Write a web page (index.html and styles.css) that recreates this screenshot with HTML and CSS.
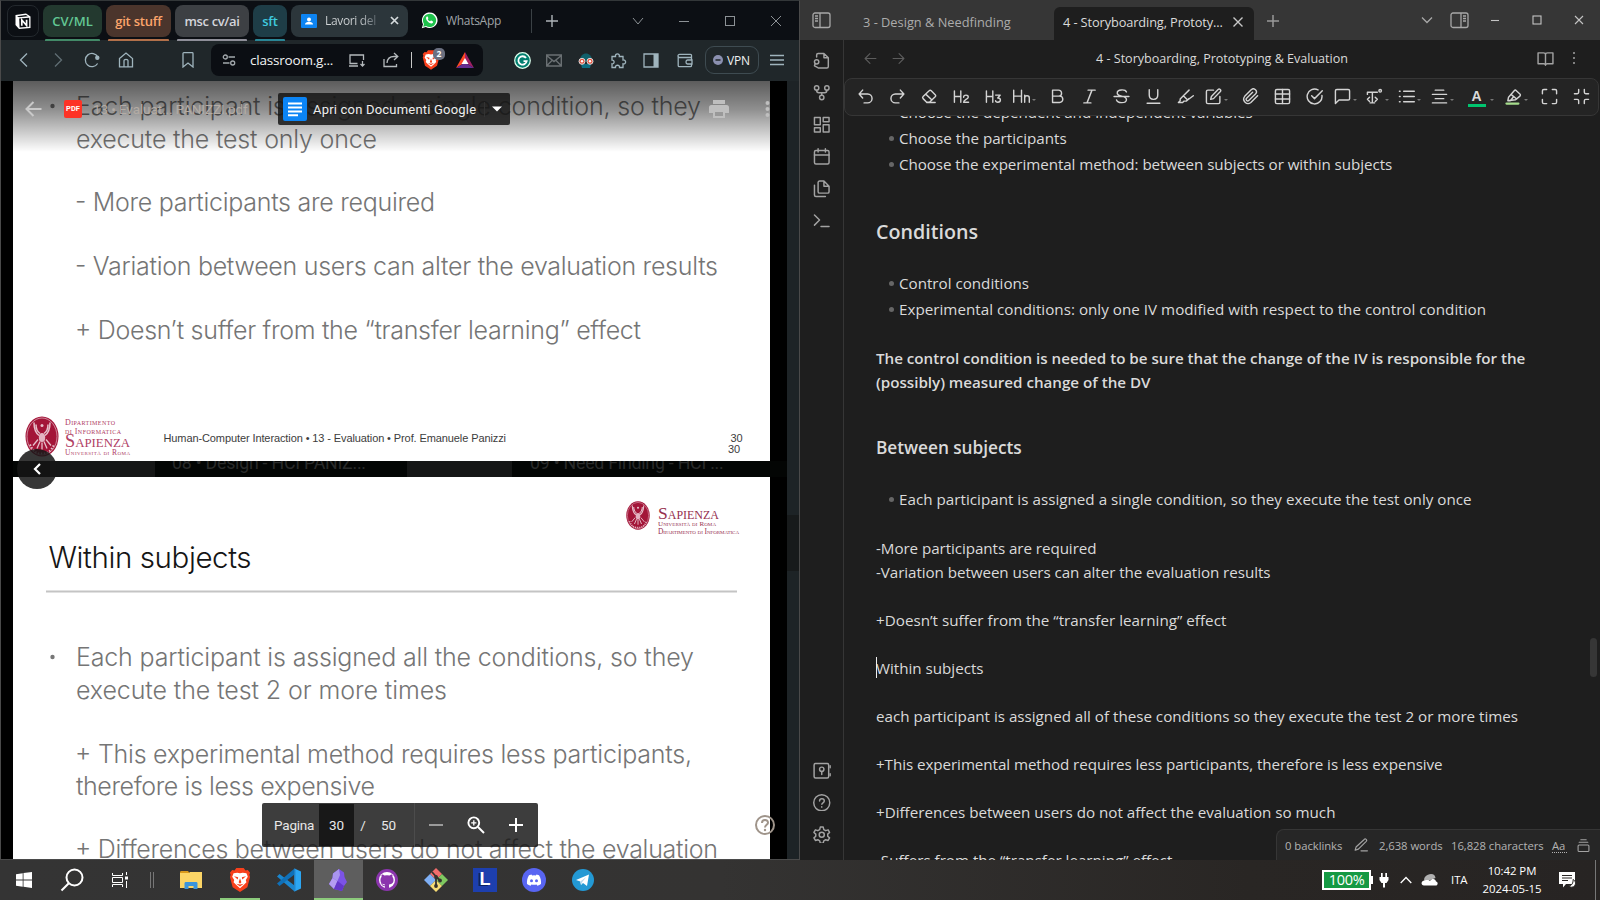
FILE: index.html
```html
<!DOCTYPE html>
<html lang="en">
<head>
<meta charset="utf-8">
<title>Desktop</title>
<link rel="stylesheet" href="styles.css">
</head>
<body>
<div class="desktop">
<section class="browser">
  <div class="tabstrip">
    <div class="pin"><svg width="18" height="18" viewBox="0 0 18 18"><path d="M1.500 3 12 1.500 16.500 4.600V16L5 17 1.500 13z" fill="#fff"/><path d="M3 4.200 12 3l2 1.300L5 5.200zM5.200 6.500 15.200 5.800v9L5.600 15.600z" fill="#0c0f14"/><path d="M7.800 13.800V8L12.600 13.500V7.700" stroke="#fff" stroke-width="1.700" fill="none"/></svg></div>
    <div class="group g1">CV/ML</div><div class="group g2">git stuff</div><div class="group g3">msc cv/ai</div><div class="group g4">sft</div>
    <div class="tab-active"><svg width="16" height="14" viewBox="0 0 16 14"><rect width="16" height="14" rx="1" fill="#0d84f2"/><circle cx="8" cy="5.4" r="2" fill="#fff"/><path d="M4 10.6c0-2 2-2.8 4-2.8s4 .8 4 2.8z" fill="#fff"/></svg><span class="tab-title">Lavori del</span><svg width="9" height="9" viewBox="0 0 9 9"><path d="M1 1l7 7M8 1l-7 7" stroke="#d5dadd" stroke-width="1.7"/></svg></div>
    <div class="tab-wa"><svg width="17" height="17" viewBox="0 0 17 17"><path d="M.8 16.3 2 12.2A7.8 7.8 0 1 1 4.8 15z" fill="#fff"/><path d="M2.2 14.8 3 12a6.6 6.6 0 1 1 2.2 2.1z" fill="#1fc24c"/><path d="M5.9 4.6c-1.7 1.2-.6 3.6 1.1 5.2 1.7 1.600 4 2.300 5 .6.300-.7.100-.9-.5-1.200l-1.200-.6c-.5-.2-.7.800-1.200.7C8 8.900 7 7.900 6.800 7.200c0-.4.7-.7.500-1.200l-.5-1.200c-.2-.400-.6-.400-.9-.2z" fill="#fff"/></svg><span>WhatsApp</span></div>
    <div class="cell plus"><svg width="12" height="12" viewBox="0 0 12 12"><path d="M6 0v12M0 6h12" stroke="#aeb4b8" stroke-width="1.4"/></svg></div>
    <div class="winbtns">
      <svg width="46" height="12" viewBox="0 0 46 12"><path d="M18 3l5 6 5-6" class="wl"/></svg>
      <svg width="46" height="12" viewBox="0 0 46 12"><path d="M18 6.500h10" class="wl"/></svg>
      <svg width="46" height="12" viewBox="0 0 46 12"><rect x="18.500" y="1.500" width="9" height="9" class="wl"/></svg>
      <svg width="46" height="12" viewBox="0 0 46 12"><path d="M18 1l10 10M28 1L18 11" class="wl"/></svg>
    </div>
  </div>
  <div class="navbar">
    <div class="cell w34"><svg width="16" height="16" viewBox="0 0 16 16"><path d="M11 1.500 4.500 8l6.500 6.500" class="nl"/></svg></div>
    <div class="cell w34 dim"><svg width="16" height="16" viewBox="0 0 16 16"><path d="M5 1.500 11.500 8 5 14.500" class="nl"/></svg></div>
    <div class="cell w34"><svg width="16" height="16" viewBox="0 0 16 16"><path d="M13.600 11.500A6.600 6.600 0 1 1 13.800 5" class="nl"/><circle cx="13.300" cy="5.800" r="2.200" fill="#9fb4bd"/></svg></div>
    <div class="cell w34"><svg width="16" height="16" viewBox="0 0 16 16"><path d="M1.500 6.500 8 1l6.500 5.500v8.400h-13zM6 14.900V8.500c0-1.500 4-1.500 4 0v6.400" class="nl"/></svg></div>
    <div class="cell w34 bookmark"><svg width="16" height="16" viewBox="0 0 16 16"><path d="M3 1.500c0-.5.4-.8.800-.8h8.400c.5 0 .8.3.8.8v13.500L8 11l-5 4z" class="nl"/></svg></div>
    <div class="urlbar">
      <div class="cell site"><svg width="14" height="14" viewBox="0 0 14 14"><g fill="none" stroke="#a3a9ad" stroke-width="1.300"><circle cx="3.300" cy="4" r="2"/><circle cx="10.700" cy="10" r="2"/><path d="M6.500 4H13M1 10h6.500"/></g></svg></div>
      <span class="url">classroom.g...</span>
      <div class="cell"><svg width="18" height="16" viewBox="0 0 18 16"><path d="M9.500 11.500H2V3h13.500v5M1 14h9M14.500 9v5M12.500 12l2 2 2-2" fill="none" stroke="#b4b9bc" stroke-width="1.300"/></svg></div>
      <div class="cell share"><svg width="16" height="16" viewBox="0 0 16 16"><path d="M1 7v7.500h12.500V12M4 11c.3-4 3-6.500 7-6.500h3M11 1l3.800 3.500L11 8" fill="none" stroke="#b4b9bc" stroke-width="1.300"/></svg></div>
      <i class="usep"></i>
      <div class="cell brave"><svg width="18" height="20" viewBox="0 0 24 26"><use href="#lion"/></svg><b class="badge">2</b></div>
      <div class="cell bat"><svg width="18" height="16" viewBox="0 0 18 16"><path d="M9 0 0 16 9 10.500z" fill="#ff4724"/><path d="M9 0l9 16-9-5.500z" fill="#9e1f63"/><path d="M0 16h18l-9-5.500z" fill="#662d91"/><path d="M9 6l-3.500 6h7z" fill="#fff"/></svg></div>
    </div>
    <div class="cell ext"><svg width="17" height="17" viewBox="0 0 17 17"><circle cx="8.500" cy="8.500" r="7.800" fill="#027e6f" stroke="#dfe" stroke-width="1.200"/><path d="M12 6A4.200 4.200 0 1 0 12.700 9.200H9.500" fill="none" stroke="#fff" stroke-width="1.800"/></svg></div>
    <div class="cell"><svg width="16" height="13" viewBox="0 0 16 13"><path d="M.7 1h14.600v11H.7zM.7 1.500 8 7.500l7.300-6M1 11.500l5-5M15 11.500l-5-5" fill="none" stroke="#6a7073" stroke-width="1.400"/></svg></div>
    <div class="cell"><svg width="16" height="15" viewBox="0 0 16 15"><path d="M2 8C1.500-2 14.500-2 14 8z" fill="#11606b"/><path d="M3 11h10l-1 4H4z" fill="#0d6d80"/><circle cx="4" cy="8.300" r="3" fill="#e8503a" stroke="#ddd"/><circle cx="12" cy="8.300" r="3" fill="#e8503a" stroke="#ddd"/><circle cx="4" cy="8.300" r="1.200" fill="#fff"/><circle cx="12" cy="8.300" r="1.200" fill="#fff"/></svg></div>
    <div class="cell"><svg width="17" height="17" viewBox="0 0 17 17"><path d="M2 4.500h3.500C4.800 1 10 1 9.300 4.500H13V8c3.500-.7 3.500 4.500 0 3.800v3.700H9.500c.5-3-4.500-3-4 0H2v-3.700c2.800.4 2.800-4 0-3.700z" class="nl"/></svg></div>
    <div class="cell w34"><svg width="16" height="15" viewBox="0 0 16 15"><path d="M1 1h14v13H1z" class="nl"/><path d="M10.500 1H15v13h-4.500z" fill="#9fb4bd"/></svg></div>
    <div class="cell w34"><svg width="16" height="15" viewBox="0 0 16 15"><path d="M14.500 4.500v-2c0-.8-.4-1.200-1-1.200H2.500c-2 0-2 3.200 0 3.200h12V7M1.200 3v9.500c0 .8.500 1.200 1.200 1.200h11c.7 0 1.100-.4 1.100-1.200V11M10.500 7H15v4h-4.500c-2 0-2-4 0-4z" class="nl"/></svg></div>
    <div class="vpn"><svg width="10" height="10" viewBox="0 0 10 10"><circle cx="5" cy="5" r="5" fill="#8b90b0"/><path d="M2.500 5h5" stroke="#20272a" stroke-width="1.500"/></svg>VPN</div>
    <div class="cell menu"><svg width="14" height="12" viewBox="0 0 14 12"><path d="M0 1.500h14M0 6h14M0 10.500h14" class="nl"/></svg></div>
  </div>
  <div class="viewer">
    <div class="pages">
      <svg class="slide s1" viewBox="13 81 757 380" width="757" height="380">
        <g class="body">
          <circle cx="52.500" cy="106" r="2.200" fill="#777"/>
          <text x="76" y="115" textLength="625">Each participant is assigned a single condition, so they</text>
          <text x="76" y="147.500" textLength="301">execute the test only once</text>
          <text x="75" y="211" textLength="360">- More participants are required</text>
          <text x="75" y="274.500" textLength="643">- Variation between users can alter the evaluation results</text>
          <text x="75" y="339" textLength="566">+ Doesn’t suffer from the “transfer learning” effect</text>
        </g>
        <g transform="translate(42 436.500)"><use href="#seal"/></g>
        <g class="smcap" fill="#b04064"><text x="65" y="425" textLength="50" font-size="8">Dipartimento</text><text x="65" y="433.500" textLength="56" font-size="8">di Informatica</text><text x="65" y="447" textLength="65" lengthAdjust="spacingAndGlyphs" font-size="18.500">Sapienza</text><text x="65" y="454.500" textLength="65" font-size="7.500">Università di Roma</text></g>
        <g class="foot"><text x="163.500" y="442" textLength="342.500">Human-Computer Interaction • 13 - Evaluation • Prof. Emanuele Panizzi</text><text x="730.500" y="441.500">30</text><text x="728" y="453">30</text></g>
      </svg>
      <div class="backdrop"><i class="thumb t1"></i><span class="file f1">08 • Design - HCI PANIZ...</span><i class="thumb t2"></i><span class="file f2">09 • Need Finding - HCI ...</span></div>
      <svg class="slide s2" viewBox="13 477 757 382" width="757" height="382">
        <g transform="translate(638 515.500) scale(.71)"><use href="#seal"/></g>
        <g class="smcap" fill="#96304f"><text x="658" y="518.500" textLength="61" lengthAdjust="spacingAndGlyphs" font-size="17.500">Sapienza</text><text x="658" y="526" textLength="58" font-size="7">Università di Roma</text><text x="658" y="533.500" textLength="81" font-size="7.500">Dipartimento di Informatica</text></g>
        <text class="title" x="48.500" y="567.500" textLength="203">Within subjects</text>
        <path d="M46 591.500h691" stroke="#c4c4c4" stroke-width="2"/>
        <g class="body">
          <circle cx="52.500" cy="657" r="2.200" fill="#777"/>
          <text x="76" y="666" textLength="618">Each participant is assigned all the conditions, so they</text>
          <text x="76" y="699" textLength="371">execute the test 2 or more times</text>
          <text x="75" y="762.500" textLength="617">+ This experimental method requires less participants,</text>
          <text x="76" y="794.500" textLength="299">therefore is less expensive</text>
          <text x="75" y="858" textLength="643">+ Differences between users do not affect the evaluation</text>
        </g>
      </svg>
    </div>
    <div class="vscroll"><i></i></div>
    <div class="shade">
      <svg class="back" width="17" height="16" viewBox="0 0 17 16"><path d="M16.500 8H2M8.500 1 1.500 8l7 7" fill="none" stroke="#c9c9c9" stroke-width="2"/></svg>
      <span class="pdf">PDF</span><span class="fname">13 • Evaluat... PANIZZI.pdf</span>
      <div class="openwith"><svg width="24" height="24" viewBox="0 0 24 24"><rect width="24" height="24" rx="2" fill="#0b84f5"/><path d="M5 6.500h14M5 10.500h14M5 14.500h14M5 18.300h10" stroke="#fff" stroke-width="2"/></svg><span>Apri con Documenti Google</span><svg class="dd" width="10" height="6" viewBox="0 0 10 6"><path d="M0 .5h10L5 5.500z" fill="#fff"/></svg></div>
      <svg class="print" width="20" height="18" viewBox="0 0 20 18"><path d="M4 0h12v4H4zM2.500 5h15A2.500 2.500 0 0 1 20 7.500V13h-4v-3H4v3H0V7.500A2.500 2.500 0 0 1 2.500 5zM4 10h12v8H4z" fill="#bfbfbf"/><path d="M6 12h8v4H6z" fill="#999"/></svg>
      <svg class="more" width="5" height="18" viewBox="0 0 5 18"><g fill="#bfbfbf"><circle cx="2.500" cy="3" r="2"/><circle cx="2.500" cy="9" r="2"/><circle cx="2.500" cy="15" r="2"/></g></svg>
    </div>
    <div class="prev"><svg width="8" height="12" viewBox="0 0 8 12"><path d="M7 1 2 6l5 5" fill="none" stroke="#fff" stroke-width="2.200"/></svg></div>
    <div class="pager"><span class="pl">Pagina</span><span class="pn">30</span><span class="ps">/</span><span class="pt">50</span>
      <div class="zoomers"><svg width="14" height="14" viewBox="0 0 14 14"><path d="M0 7h14" stroke="#9a9a9a" stroke-width="2"/></svg><svg width="18" height="18" viewBox="0 0 18 18"><g fill="none" stroke="#fff" stroke-width="1.900"><circle cx="6.800" cy="6.800" r="5.400"/><path d="M11 11l6 6"/><path d="M4.200 6.800h5.200M6.800 4.200v5.200" stroke-width="1.300"/></g></svg><svg width="14" height="14" viewBox="0 0 14 14"><path d="M0 7h14M7 0v14" stroke="#fff" stroke-width="2"/></svg></div></div>
    <svg class="help" width="20" height="20" viewBox="0 0 20 20"><g fill="none" stroke="#9f948a" stroke-width="2"><circle cx="10" cy="10" r="9"/><path d="M7 8c0-4 6-4 6-.3 0 2-3 2.300-3 4.800"/></g><circle cx="10" cy="15" r="1.200" fill="#9f948a"/></svg>
  </div>
</section>

<section class="notes">
  <div class="ntabs">
    <div class="cell ntoggle"><svg width="19" height="17" viewBox="0 0 19 17"><rect x="1" y="1" width="17" height="14.500" rx="2" class="ol"/><path d="M8 1v14.500M3 4h3M3 6.500h3M3 9h3" class="ol"/></svg></div>
    <div class="ntab">3 - Design &amp; Needfinding</div>
    <div class="ntab on"><span>4 - Storyboarding, Prototy...</span><svg width="10" height="10" viewBox="0 0 10 10"><path d="M.5.5l9 9M9.500.5l-9 9" stroke="#c8c8c8" stroke-width="1.400"/></svg></div>
    <div class="cell nplus"><svg width="12" height="12" viewBox="0 0 12 12"><path d="M6 0v12M0 6h12" stroke="#999" stroke-width="1.500"/></svg></div>
    <div class="nwin">
      <svg class="n1" width="12" height="8" viewBox="0 0 12 8"><path d="M1 1.500l5 5 5-5" class="ol"/></svg>
      <svg class="n2" width="19" height="17" viewBox="0 0 19 17"><rect x="1" y="1" width="17" height="14.500" rx="2" class="ol"/><path d="M11 1v14.500M13 4h3M13 6.500h3M13 9h3" class="ol"/></svg>
      <svg class="n3" width="10" height="10" viewBox="0 0 10 10"><path d="M1 5.500h8" class="wl2"/></svg>
      <svg class="n4" width="10" height="10" viewBox="0 0 10 10"><rect x="1" y="1" width="8" height="8" class="wl2"/></svg>
      <svg class="n5" width="10" height="10" viewBox="0 0 10 10"><path d="M1 1l8 8M9 1L1 9" class="wl2"/></svg>
    </div>
  </div>
  <div class="nbody">
    <div class="ribbon">
      <svg viewBox="0 0 24 24"><path d="M5 7V4a2 2 0 0 1 2-2h8l6 6v12a2 2 0 0 1-2 2H7M15 2v6h6"/><circle cx="5" cy="13.500" r="3"/><path d="M3 16l-1 3 4 2"/></svg>
      <svg viewBox="0 0 24 24"><circle cx="12" cy="18.500" r="3"/><circle cx="5" cy="5.500" r="3"/><circle cx="19" cy="5.500" r="3"/><path d="M5 8.500c0 2.500 1 3.500 3 3.500h8c2 0 3-1 3-3.500M12 12v3.500"/></svg>
      <svg viewBox="0 0 24 24"><rect x="2" y="2" width="8" height="10"/><rect x="14" y="2" width="8" height="6"/><rect x="14" y="12" width="8" height="10"/><rect x="2" y="16" width="8" height="6"/></svg>
      <svg viewBox="0 0 24 24"><rect x="2" y="3.500" width="20" height="18.500" rx="2"/><path d="M2 9.500h20M7 1v4.500M17 1v4.500"/></svg>
      <svg viewBox="0 0 24 24"><path d="M15 1.500H9a2 2 0 0 0-2 2V16a2 2 0 0 0 2 2h11a2 2 0 0 0 2-2V8.500zM15 1.500v7h7M2 7v13.500a2 2 0 0 0 2 2h13"/></svg>
      <svg viewBox="0 0 24 24"><path d="M2 4l7 7-7 7M11 20h11"/></svg>
      <span class="grow"></span>
      <svg viewBox="0 0 24 24"><rect x="1.500" y="2" width="20" height="20" rx="2"/><circle cx="12" cy="10" r="3"/><path d="M12 13v4M23.500 5v3M23.500 16v3"/></svg>
      <svg viewBox="0 0 24 24"><circle cx="12" cy="12" r="11"/><path d="M9 9.500c0-4 6.500-4 6.500 0 0 2.500-3.300 2.500-3.300 4.500M12 17.500v.5"/></svg>
      <svg viewBox="0 0 24 24"><path d="M10 1.500h4l.8 3.400 2.600 1.500 3.300-1.100 2 3.500-2.500 2.300v3l2.500 2.200-2 3.500-3.300-1-2.600 1.500-.8 3.200h-4l-.8-3.200-2.600-1.500-3.300 1-2-3.500 2.500-2.200v-3L1.300 8.800l2-3.500 3.300 1.100 2.600-1.500z"/><circle cx="12" cy="12" r="3.500"/></svg>
    </div>
    <div class="pane">
      <div class="phead"><svg class="a1" viewBox="0 0 24 24"><path d="M22 12H3M11 3l-9 9 9 9"/></svg><svg class="a2" viewBox="0 0 24 24"><path d="M2 12h19M13 3l9 9-9 9"/></svg><span>4 - Storyboarding, Prototyping &amp; Evaluation</span><svg class="bk" viewBox="0 0 24 24"><path d="M12 6.500C12 5 11 4 9 4H1.500v15.500h8c1.500 0 2.500 1 2.500 2 0-1 1-2 2.500-2h8V4H15c-2 0-3 1-3 2.500v15"/></svg><svg class="dt" viewBox="0 0 6 14"><path d="M3 2v.1M3 7v.1M3 12v.1"/></svg></div>
      <div class="tools">
        <div><svg viewBox="0 0 24 24"><path d="M8 14 3 8.500 8 3M3 8.500h12a6 6 0 0 1 0 12.500h-5"/></svg></div>
        <div><svg viewBox="0 0 24 24"><path d="M16 14l5-5.500L16 3M21 8.500H9A6 6 0 0 0 9 21h5"/></svg></div>
        <div><svg viewBox="0 0 24 24"><path d="M8 20l-5-5c-1-1-1-2 0-3l8.500-8c1-1 2-1 3 0l5.500 5.500c1 1 1 2 0 3L12 20zM7 9l8.500 8M8 20.500h12"/></svg></div>
        <div><svg viewBox="0 0 24 24"><path d="M2 4v16M11 4v16M2 12h9M15 13c0-4 7-4 6.500 0-.3 3-6.500 3.500-6.500 7h7"/></svg></div>
        <div><svg viewBox="0 0 24 24"><path d="M2 4v16M11 4v16M2 12h9M15 10h6.500l-3.500 4c5 0 5 6 0 6-1.500 0-3-.7-3-2"/></svg></div>
        <div class="k"><svg viewBox="0 0 24 24"><path d="M1 3v17M12 3v17M1 11.500h11M16.500 10v10M16.500 14c0-4 6.500-4 6.500 0v6"/></svg><i></i></div>
        <div><svg viewBox="0 0 24 24"><path d="M5 3h8.500a4.200 4.200 0 0 1 0 8.500H5zM5 11.500h10a4.300 4.300 0 0 1 0 9H5z"/></svg></div>
        <div><svg viewBox="0 0 24 24"><path d="M20 3H10M14 21H4M15.500 3l-7 18"/></svg></div>
        <div><svg viewBox="0 0 24 24"><path d="M19 5.500C17.500 1.500 5 1.500 6 7.500c.5 5 13.500 3 13 9-.5 5.500-12.500 5.500-14 .5M1.500 12h21"/></svg></div>
        <div><svg viewBox="0 0 24 24"><path d="M6 2.500V10c0 8 12 8 12 0V2.500M3 21.500h18"/></svg></div>
        <div><svg viewBox="0 0 24 24"><path d="M9 11l-4.500 4.500v2.500L2 20.500h6l2-2h3l4-3.500M9 11l8-8M9 11l6 6 8-6"/></svg></div>
        <div class="k"><svg viewBox="0 0 24 24"><path d="M12 3H4a2 2 0 0 0-2 2v15a2 2 0 0 0 2 2h15a2 2 0 0 0 2-2v-8M18.500 2a2.200 2.200 0 0 1 3.200 3L12 15l-4 1 1-4z"/></svg><i></i></div>
        <div><svg viewBox="0 0 24 24"><path d="M22 11l-9.500 9.500a6.200 6.200 0 0 1-8.700-8.700L13 2.500a4.200 4.200 0 0 1 6 6l-9.500 9a2 2 0 0 1-3-3L15 6"/></svg></div>
        <div><svg viewBox="0 0 24 24"><rect x="2" y="2" width="20" height="20" rx="2"/><path d="M2 8.500h20M2 15.500h20M12 2v20"/></svg></div>
        <div><svg viewBox="0 0 24 24"><path d="M22.500 10.500A10.500 10.500 0 1 1 17 2.700M8 11l4 4L23 4"/></svg></div>
        <div class="k"><svg viewBox="0 0 24 24"><path d="M22 15a2 2 0 0 1-2 2H7l-5 5V4a2 2 0 0 1 2-2h16a2 2 0 0 1 2 2z"/></svg><i></i></div>
        <div class="k"><svg viewBox="0 0 24 24"><path d="M2 9V6h14M9 6v15M6 21h6M5 13l-3 3 3 3M13 13l3 3-3 3"/><circle cx="20" cy="4" r="1.800"/></svg><i></i></div>
        <div class="k"><svg viewBox="0 0 24 24"><path d="M8 4.500h15M8 12h15M8 19.500h15M2 4.500h1M2 12h1M2 19.500h1"/></svg><i></i></div>
        <div class="k"><svg viewBox="0 0 24 24"><path d="M6 3h12M2 9h20M6 15h12M2 21h20"/></svg><i></i></div>
        <div class="k fc"><b>A</b><i></i></div>
        <div class="k"><svg viewBox="0 0 24 24"><path d="M4 18l1-5 8-9c1-1.500 2-1.500 3 0l5 4.500c1 1 1 2 0 3l-6 5zM8.500 9l8 6.500M7.500 18l4-5"/><path d="M2 22h17" stroke="#a5dc8c" stroke-width="3"/></svg><i></i></div>
        <div><svg viewBox="0 0 24 24"><path d="M8 2H4a2 2 0 0 0-2 2v4M16 2h4a2 2 0 0 1 2 2v4M2 16v4a2 2 0 0 0 2 2h4M22 16v4a2 2 0 0 1-2 2h-4"/></svg></div>
        <div><svg viewBox="0 0 24 24"><path d="M8 2v4a2 2 0 0 1-2 2H2M16 2v4a2 2 0 0 0 2 2h4M2 16h4a2 2 0 0 1 2 2v4M22 16h-4a2 2 0 0 0-2 2v4"/></svg></div>
      </div>
      <div class="editor">
        <ul class="first"><li>Choose the dependent and independent variables</li><li>Choose the participants</li><li class="tight">Choose the experimental method: between subjects or within subjects</li></ul>
        <h2>Conditions</h2>
        <ul><li>Control conditions</li><li class="loose">Experimental conditions: only one IV modified with respect to the control condition</li></ul>
        <p class="strong">The control condition is needed to be sure that the change of the IV is responsible for the<br>(possibly) measured change of the DV</p>
        <h3>Between subjects</h3>
        <ul><li class="loose">Each participant is assigned a single condition, so they execute the test only once</li></ul>
        <p class="tight">-More participants are required<br>-Variation between users can alter the evaluation results</p>
        <p class="loose">+Doesn’t suffer from the “transfer learning” effect</p>
        <p class="caret">Within subjects</p>
        <p>each participant is assigned all of these conditions so they execute the test 2 or more times</p>
        <p class="tight">+This experimental method requires less participants, therefore is less expensive</p>
        <p>+Differences between users do not affect the evaluation so much</p>
        <p>-Suffers from the “transfer learning” effect</p>
        <i class="nthumb"></i>
        <div class="status"><span class="st1">0 backlinks</span><svg class="st2" viewBox="0 0 24 24"><path d="M17.500 2.500a2.300 2.300 0 0 1 3.500 3.200L7.500 19 2 21l1.500-5.500zM12 22h11"/></svg><span class="st3">2,638 words</span><span class="st4">16,828 characters</span><span class="aa">Aa</span><svg class="st5" viewBox="0 0 24 24"><rect x="2" y="11" width="20" height="12" rx="2"/><path d="M4 6h16M7 1.500h10"/></svg></div>
      </div>
    </div>
  </div>
</section>
</div>

<footer class="taskbar">
  <div class="tk"><svg width="16" height="16" viewBox="0 0 16 16"><path d="M0 2.200 6.700 1.200v6.400H0zM7.500 1.100 16 0v7.600H7.500zM0 8.400h6.700v6.400L0 13.800zM7.500 8.400H16V16l-8.500-1.200z" fill="#fff"/></svg></div>
  <div class="tk"><svg width="24" height="24" viewBox="0 0 24 24"><g fill="none" stroke="#fff" stroke-width="2"><circle cx="14.500" cy="9.500" r="8"/><path d="M8.800 15.200 1.500 22.500"/></g></svg></div>
  <div class="tk"><svg width="16" height="16" viewBox="0 0 16 16"><path d="M.5 1v2.500h10V1M.5 15v-2.500h10V15M.5 5.500h10v5H.5zM14.500 0v3M14.500 9v7" fill="none" stroke="#fff"/><path d="M13 4.500h3v3h-3z" fill="#fff"/></svg></div>
  <div class="tsep"></div>
  <div class="tb"><svg width="22" height="18" viewBox="0 0 22 18"><path d="M0 1.500C0 .7.500 0 1.300 0H8l1.500 2H0z" fill="#d99a1c"/><path d="M0 2h9.500V1H22v16H0z" fill="#fbd566"/><path d="M4.500 18v-5.500c0-1 .6-1.500 1.500-1.500h10c1 0 1.500.5 1.500 1.500V18h-4v-3h-5v3z" fill="#3a94dc"/></svg></div>
  <div class="tb run"><svg width="22" height="24" viewBox="0 0 24 26"><g id="lion"><path d="M12 0h4l2 2.500 2.500-.3L23 5l-.8 2.300.8 2.500-3 11L12 26 4 20.800l-3-11 .8-2.500L1 5l2.500-2.800L6 2.500 8 0z" fill="#f8401c"/><path d="M12 5.500 9 5 5 5.500 3.500 9.500l2.200 3.500-.7 2.500 3 3 4 3.500 4-3.500 3-3-.7-2.500 2.200-3.500L19 5.500 15 5z" fill="#fff"/><path d="M5.500 9l4.500 1-.5 2.500zM18.500 9 14 10l.5 2.500zM12 11l1.500 4.500L12 17l-1.500-1.500zM8 17l4 1 4-1-4 3z" fill="#f8401c"/></g></svg></div>
  <div class="tb"><svg width="24" height="24" viewBox="0 0 24 24"><path d="M17.500.5 24 3.500v17l-6.500 3z" fill="#2ca6f2"/><path d="M17.500 23.500 0 8.500 2.500 6l15 11.500z" fill="#1a86cf"/><path d="M17.500.5 0 15.500 2.500 18l15-11.500z" fill="#0f70b8"/><path d="M17.500.5v23l1.500-.7V1.200z" fill="#2496e4"/></svg></div>
  <div class="tb act"><svg width="18" height="22" viewBox="0 0 18 22"><path d="M10 0 4 4.500 3.500 9 0 15l5 5 8 2 2-5 3-4-2.500-5-.5-4.500z" fill="#7c53e6"/><path d="M10 0 4 4.500 3.500 9l5 3L11 6z" fill="#a995ef"/><path d="M3.500 9 0 15l5 5 3.500-8z" fill="#b49cf2"/><path d="m8.500 12 6.500 5-2 5-8-2z" fill="#6437c9"/></svg></div>
  <div class="tb"><svg width="22" height="22" viewBox="0 0 22 22"><circle cx="11" cy="11" r="11" fill="#8b35ad"/><circle cx="11" cy="11" r="8" fill="#fff"/><path d="M9 19v-3.500c-3.500-.3-4.500-2-4.500-4.500 0-1.300.4-2.200 1.100-3-.2-.8-.2-1.700.2-2.500 1 0 2 .5 2.700 1a9 9 0 0 1 5 0c.7-.5 1.700-1 2.700-1 .4.800.4 1.700.2 2.500.7.800 1.100 1.700 1.100 3 0 2.500-1 4.200-4.500 4.500V19zM4.500 14c1.500 0 2 2.500 4.500 2.200v1C6 17.500 6 15 4.500 14z" fill="#8b35ad"/></svg></div>
  <div class="tb"><svg width="24" height="24" viewBox="0 0 24 24"><path d="m12 0 6 6-6 6-6-6z" fill="#f26d6d"/><path d="m6 6 6 6-6 6-6-6z" fill="#7fb0f5"/><path d="m18 6 6 6-6 6-6-6z" fill="#7fc860"/><path d="m12 12 6 6-6 6-6-6z" fill="#f7dc74"/><path d="M8 4l4 4.500V18M12 8.500l4 4" fill="none" stroke="#35322f" stroke-width="1.800"/><circle cx="12" cy="9" r="1.900" fill="#35322f"/><circle cx="16" cy="12.500" r="1.900" fill="#35322f"/><circle cx="12" cy="18" r="1.900" fill="#35322f"/></svg></div>
  <div class="tb"><span class="ell">L</span></div>
  <div class="tb"><svg width="24" height="24" viewBox="0 0 24 24"><circle cx="12" cy="12" r="12" fill="#5865f2"/><path d="M9.500 6.500 7 7.300C5.300 10 4.700 13 5 16c1 .9 2.300 1.500 3.600 1.800l.8-1.400c1.700.5 3.500.5 5.200 0l.8 1.400c1.300-.3 2.600-.9 3.600-1.800.3-3-.3-6-2-8.700l-2.500-.8-.6 1a9 9 0 0 0-3.800 0z" fill="#fff"/><circle cx="9.500" cy="12.700" r="1.500" fill="#5865f2"/><circle cx="14.500" cy="12.700" r="1.500" fill="#5865f2"/></svg></div>
  <div class="tb"><svg width="22" height="22" viewBox="0 0 22 22"><circle cx="11" cy="11" r="11" fill="#2399d4"/><path d="M4 11 17 5.500 15 17l-4-3-2 2-.7-3.500z" fill="#fff"/><path d="m8.300 12.500 6-4.500-4 5-1.300 3z" fill="#b9d9ec"/></svg></div>
  <div class="tray">
    <span class="batt">100%</span>
    <svg class="plug" width="10" height="16" viewBox="0 0 10 16"><path d="M2 1h1.700v4h2.600V1H8v4h1.500v3L7.500 11H6v4.500H4V11H2.500l-2-3V5H2z" fill="#fff"/></svg>
    <svg class="up" width="12" height="8" viewBox="0 0 12 8"><path d="M.7 7 6 1.500 11.300 7" fill="none" stroke="#fff" stroke-width="1.300"/></svg>
    <svg class="cloud" width="17" height="12" viewBox="0 0 17 12"><path d="M4 8c-3-4 2-8 6-8 3 0 4 1.500 4.500 4z" fill="#b0b0b0"/><path d="M3 11.500C-.5 11.500 0 7 3 6.500c1 0 1.500-.5 3-.5s2.500.5 3 1c2-3 5.500-2.500 6 .5 2.500.5 2 4-.5 4z" fill="#fff"/></svg>
    <span class="lang">ITA</span>
    <span class="clock">10:42 PM<br>2024-05-15</span>
    <svg class="ac" width="17" height="16" viewBox="0 0 17 16"><path d="M0 0h16v12h-9l-3 3.500V12H0z" fill="#fff"/><path d="M3 3.500h10M3 6h10M3 8.500h6" stroke="#2a2725"/><path d="M14 7.500a4 4 0 1 1-4.500 6.300c3 .5 5-3 4.500-6.300z" fill="#fff" stroke="#2a2725"/></svg>
    <i class="edge"></i>
  </div>
</footer>

<svg class="defs" width="0" height="0"><defs><g id="seal"><ellipse rx="16.500" ry="20" fill="#a31538"/><ellipse rx="15" ry="18.500" fill="none" stroke="#e3b9c5" stroke-width=".7"/><g fill="none" stroke="#e6c0cb"><path d="M-3-1C-7-4-8-8-8-14M-2-3c-3-2-4-6-4-9M3-1c4-3 5-7 5-13M2-3c3-2 4-6 4-9" stroke-width="1.500"/><path d="M-4 3l-5 6M4 3l5 6M-2 5l-3 7M2 5l3 7M0 6v7" stroke-width="1.300"/><path d="M-12 8C-8 17-4 17 0 17s8 0 12-9" stroke-dasharray="1.500 1.500" stroke-width="2"/></g><ellipse cy="1" rx="3.200" ry="4.500" fill="#e3b3c1"/><circle cy="-11" r="1.500" fill="#e6c0cb"/></g></defs></svg>
</body>
</html>
```
FILE: styles.css
```css
*{box-sizing:border-box}
body{margin:0;width:1600px;height:900px;overflow:hidden;background:#1e1e1e;font-family:"Open Sans","Noto Sans",sans-serif}
svg{display:block;flex:none}
.defs{position:absolute}
.desktop{display:flex;height:860px}
.cell{width:32px;display:flex;align-items:center;justify-content:center;flex:none}
.w34{width:34px}

/* browser */
.browser{width:800px;height:860px;display:flex;flex-direction:column;border:1px solid #4a4a4a;border-top-color:#333739;background:#000}
.tabstrip{height:39px;background:#0c0f14;display:flex;align-items:center;padding-left:6px;flex:none}
.pin{width:32px;height:32px;border:1px solid #23282d;border-radius:8px;display:flex;align-items:center;justify-content:center;margin-right:4px}
.group{height:32px;border-radius:8px;margin-right:4px;font-weight:600;font-size:13px;line-height:32px;text-align:center;letter-spacing:-.2px;position:relative}
.group::after{content:"";position:absolute;left:2px;right:2px;bottom:-4px;height:2px;border-radius:1px 1px 0 0}
.g1{width:59px;background:#23392f;color:#62c794;letter-spacing:0}
.g1::after{background:#438a68}
.g2{width:65px;background:#4b352c;color:#fba46b}
.g2::after{background:#b2704a}
.g3{width:74px;background:#3d4044;color:#d4d5dc;letter-spacing:-.35px}
.g3::after{background:#8f8f99}
.g4{width:34px;background:#1e3d47;color:#3ecadf}
.g4::after{background:#2a8696}
.tab-active{width:117px;height:32px;border-radius:8px;background:#2c363b;display:flex;align-items:center;padding-left:10px}
.tab-title{width:52px;margin:0 13px 0 8px;white-space:nowrap;font-size:12px;letter-spacing:-.35px;background:linear-gradient(90deg,#d0d4d6 65%,#59636a);-webkit-background-clip:text;color:transparent}
.tab-wa{width:111px;height:24px;margin-left:13px;display:flex;align-items:center;gap:8px;border-right:1px solid #3b4145;color:#a0a5a8;font-size:12px;letter-spacing:-.3px}
.plus{width:40px}
.winbtns{display:flex;margin-left:43px}
.wl{fill:none;stroke:#8d9296;stroke-width:1}
.navbar{height:41px;background:#20272a;display:flex;align-items:center;padding:0 0 1px 6px;flex:none}
.nl{fill:none;stroke:#9fb4bd;stroke-width:1.3}
.dim{opacity:.5}
.bookmark{margin-left:28px}
.urlbar{width:272px;height:32px;margin-left:6px;border-radius:8px;background:#0b0e13;display:flex;align-items:center}
.site{margin-left:2px}
.url{width:91px;margin-left:5px;color:#f2f4f5;font-size:13.5px;letter-spacing:-.2px;line-height:20px}
.share{margin-left:2px}
.usep{width:1px;height:16px;background:#c8c8c8;margin:0 3px 0 4px}
.brave{position:relative}
.badge{position:absolute;left:18px;top:-2px;width:12px;height:12px;border-radius:5px;background:#6b7080;color:#fff;font-size:8.5px;line-height:12px;text-align:center}
.bat{margin-left:2px}
.ext{margin-left:23px}
.vpn{width:54px;height:28px;margin:0 2px 0 3px;border:1px solid #3e4b51;border-radius:9px;display:flex;align-items:center;gap:4px;padding-left:7px;color:#eef1f2;font-size:12px;letter-spacing:-.2px}
.viewer{position:relative;flex:1;display:flex;background:#000;overflow:hidden}
.pages{width:774px;padding-left:12px;margin-right:12px}
.s1,.s2{background:#fff}
.body{font:300 25px Inter,"Liberation Sans",sans-serif;fill:#757575}
.title{font:300 29.5px Inter,"Liberation Sans",sans-serif;fill:#151515}
.smcap{font-family:"Liberation Serif",serif;font-variant:small-caps}
.foot{font:11px "Liberation Sans",sans-serif;fill:#3c3c3c}
.backdrop{height:16px;width:774px;display:flex;background:#030504;overflow:hidden;color:#2a2b2b;font:17.8px/20px Roboto,sans-serif;white-space:nowrap}
.thumb{height:16px;background:#151616;flex:none}
.t1{width:105px;margin-left:37px}
.t2{width:105px}
.file{margin-top:-8px;letter-spacing:-.25px;flex:none}
.f1{width:235px;padding-left:0;margin-left:17px}
.f2{margin-left:18px}
.vscroll{width:12px;background:#1d2326;padding-top:434px;flex:none}
.vscroll i{display:block;height:56px;background:#171a1b}
.shade{position:absolute;left:0;top:0;width:786px;height:71px;background:linear-gradient(rgba(0,0,0,.64),rgba(0,0,0,.44) 40%,rgba(0,0,0,0));display:flex;align-items:center;padding-bottom:15px;padding-left:24px}
.pdf{width:18px;height:18px;margin-left:22px;border-radius:2px;background:#fd3326;color:#fff;font:700 7.5px/18px Roboto,sans-serif;text-align:center}
.fname{width:184px;margin-left:11px;padding-bottom:1px;color:#b3aba4;font:13.5px/20px Roboto,sans-serif;white-space:nowrap;letter-spacing:-.1px}
.openwith{width:232px;height:32px;margin-left:1px;padding-left:5px;border-radius:2px;background:rgba(22,22,22,.85);display:flex;align-items:center;color:#eee;font:13px Roboto,sans-serif;letter-spacing:.2px;white-space:nowrap}
.openwith span{width:172px;margin-left:6px;border-right:1px solid #333}
.dd{margin-left:7px}
.print{margin-left:199px}
.more{margin-left:36px}
.prev{position:absolute;left:16px;top:368px;width:40px;height:40px;border-radius:50%;background:rgba(22,22,22,.86);display:flex;align-items:center;justify-content:center}
.pager{position:absolute;left:261px;top:722px;width:276px;height:44px;border-radius:2px;background:rgba(24,24,24,.84);display:flex;align-items:center;color:#e8e8e8;font:13.5px Roboto,sans-serif;line-height:44px}
.pl{width:57px;padding-left:12px;letter-spacing:-.2px}
.pn{width:35px;height:42px;line-height:42px;background:rgba(18,18,18,.85);text-align:center}
.ps{width:18px;text-align:center}
.pt{width:42px;padding-left:9px}
.zoomers{display:flex;align-items:center;border-left:1px solid #4c4c4c;padding-left:14px;height:44px;gap:24px}
.help{position:absolute;left:754px;top:734px}

/* notes */
.notes{width:800px;display:flex;flex-direction:column;background:#1e1e1e;color:#dadada}
.ntabs{height:40px;background:#363636;display:flex;align-items:center;font-size:12.8px;flex:none}
.ntoggle{width:43px;margin-right:1px}
.ol{fill:none;stroke:#a8a8a8;stroke-width:1.3}
.ntab{width:210px;padding-left:19px;color:#acacac;padding-top:4px;white-space:nowrap}
.ntab.on{width:200px;height:33px;align-self:flex-end;border-radius:6px 6px 0 0;background:#1e1e1e;color:#dadada;display:flex;align-items:center;padding:0 0 3px 9px;letter-spacing:-.12px}
.on span{width:170px}
.nplus{width:38px;padding-top:2px}
.nwin{display:flex;align-items:center;flex:1}
.n1{margin-left:129px}.n2{margin-left:17px}.n3{margin-left:21px}.n4{margin-left:32px}.n5{margin-left:32px}
.wl2{fill:none;stroke:#c4c4c4;stroke-width:1.1}
.nbody{display:flex;height:820px}
.ribbon{width:44px;border-right:1px solid #363636;display:flex;flex-direction:column;align-items:center;gap:14.5px;padding:12px 0 17px 1px;flex:none}
.ribbon svg,.phead svg,.tools svg,.status svg{fill:none;stroke:#a3a3a3;stroke-width:2;stroke-linecap:round;stroke-linejoin:round}
.ribbon svg{width:17.5px;height:17.5px}
.grow{flex:1}
.pane{width:756px}
.phead{height:38px;display:flex;align-items:center;font-size:12.6px;padding-bottom:2px}
.phead .a1,.phead .a2{width:13px;height:13px;stroke:#5c5c5c}
.a1{margin-left:20px}.a2{margin-left:15px}
.phead span{width:270px;margin-left:182px;text-align:center;letter-spacing:-.03px;white-space:nowrap}
.bk{width:17px;height:17px;margin-left:180px}
.dt{width:6px;height:14px;margin-left:17px}
.tools{height:38px;border:1px solid #363636;border-radius:8px;background:#242424;display:flex;padding:0 0 1px 4.5px;margin-right:1px}
.tools div{width:32px;display:flex;align-items:center;justify-content:center;flex:none}
.tools svg{width:17px;height:17px;stroke:#d4d4d4}
.tools .k{justify-content:flex-start;padding-left:3px}
.tools .k i{border:2px solid transparent;border-top-color:#777;border-bottom:0;margin:7px 0 0 2px}
.tools .k:nth-child(12),.tools .k:nth-child(18){width:33px}
.tools .k:nth-child(21){width:34px;padding-left:5px}
.tools .fc{width:40px;padding-left:8px}
.fc b{width:18px;height:18px;border-bottom:3px solid #00c46f;text-align:center;font:700 14px/15px "Liberation Sans",sans-serif;margin-top:2px}
.tools .fc i{margin-left:4px}
.editor{height:744px;overflow:hidden;position:relative;padding-left:32px;font-size:15.2px;line-height:24px;letter-spacing:-.015px;white-space:nowrap}
.editor p{margin:0 0 24px}
.editor ul{list-style:none;margin:0 0 24px;padding:0 0 0 23px}
.editor .first{margin:-17.5px 0 40.5px}
.editor li{line-height:26px;position:relative}
.editor li::before{content:"";position:absolute;left:-10px;top:11px;width:5px;height:5px;border-radius:50%;background:#666}
.editor h2{font-size:19.7px;font-weight:600;line-height:30px;margin:0 0 22.5px}
.editor h3{font-size:17.3px;font-weight:600;line-height:26px;margin:0 0 25px;letter-spacing:-.05px}
.editor .strong{font-weight:600;margin-bottom:41px;letter-spacing:-.025px}
.editor .tight{letter-spacing:-.07px}
.editor .loose{letter-spacing:.015px}
.caret{position:relative}
.caret::before{content:"";position:absolute;left:0;top:1px;width:1px;height:21px;background:#eee}
.nthumb{position:absolute;right:3px;top:522px;width:7px;height:39px;border-radius:4px;background:#363636}
.status{position:absolute;right:0;bottom:0;width:324px;height:31px;border:solid #363636;border-width:1px 0 0 1px;border-radius:8px 0 0 0;background:#262626;color:#b3b3b3;font-size:11.3px;letter-spacing:-.05px;line-height:20px;padding:1px 0 0 8px;display:flex;align-items:center}
.st1{width:69px}.st3{width:72px}.st4{width:101px}
.status .st2{width:14px;height:14px;margin-right:11px;margin-top:-2px}
.status .st5{width:13px;height:15px;margin-left:10px}
.aa{line-height:13px;border-bottom:1px dotted #b3b3b3;width:15px}

/* taskbar */
.taskbar{height:40px;display:flex;background:linear-gradient(90deg,#343434,#343332 45%,#292624 78%,#272423)}
.tk,.tb{width:48px;display:flex;align-items:center;justify-content:center;flex:none;position:relative}
.tb{width:49px}
.tsep{width:4px;height:16px;margin:12px 12.500px 0 6px;border:solid #777;border-width:0 1px}
.run::after,.act::after{content:"";position:absolute;bottom:0;left:4px;right:5px;height:2px;background:#8ccb7c}
.act{background:#5e5e5e}
.act::after{left:0;right:0}
.ell{width:24px;height:24px;background:#1d3fae;color:#fff;font:700 18px/23px "Liberation Sans",sans-serif;text-align:center;text-shadow:-2px 1px #0a2260}
.tray{display:flex;align-items:center;margin-left:auto;color:#fff;font-size:11.4px;letter-spacing:-.05px}
.batt{width:49px;height:20px;border:2px solid #fff;background:#159943;font:14.5px/16px "Open Sans",sans-serif;text-align:center;letter-spacing:-.3px;position:relative;margin-right:8px}
.batt::after{content:"";position:absolute;right:-4px;top:4px;width:2px;height:8px;background:#fff}
.up{margin-left:11px}
.cloud{margin-left:9px}
.lang{margin-left:13px;width:29px;padding-bottom:1px}
.clock{width:64px;line-height:18px;text-align:center;white-space:nowrap}
.ac{margin:0 19px 0 15px}
.edge{width:1px;height:40px;background:#777;margin-right:4px}
```
